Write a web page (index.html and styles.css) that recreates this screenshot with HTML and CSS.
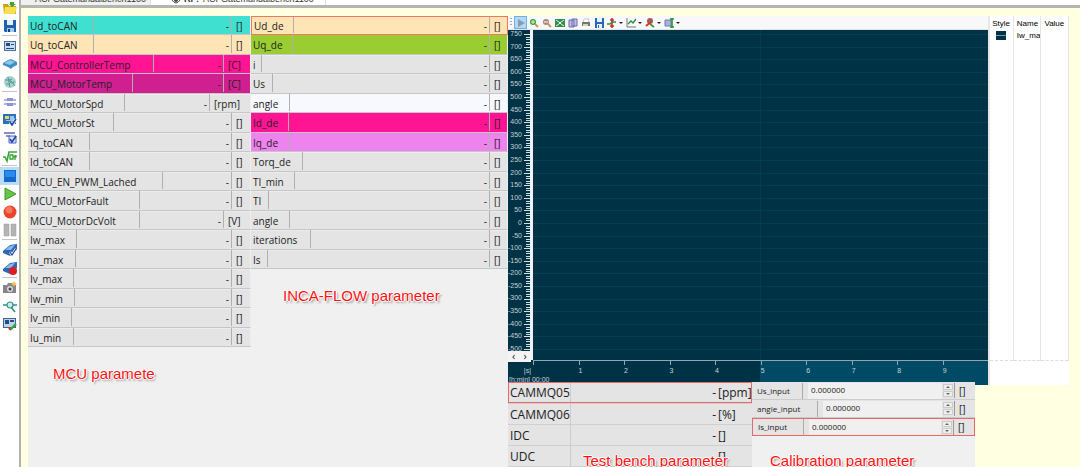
FILE: index.html
```
<!DOCTYPE html>
<html lang="en">
<head>
<meta charset="utf-8">
<title>Experiment environment</title>
<link rel="stylesheet" href="styles.css">
</head>
<body>
<div class="app">
  <nav class="rail" aria-label="Experiment tools">
    <button aria-label="Open"><svg viewBox="0 0 14 14"><path fill="#c9a21a" d="M0 3h5l1 2h7v8H1z"/><path fill="#f6e04c" d="M2 6h12l-2 7H1z"/><path fill="#39a935" d="M7 1h4v2h2l-4 3-3-3h1z"/></svg></button>
    <button aria-label="Save"><svg viewBox="0 0 14 14"><path fill="#1f62b0" d="M1 1h12v12H2l-1-1z"/><path fill="#e8f1fb" d="M4 1h6v5H4z"/><path fill="#a9c8ea" d="M4 9h7v4H4z"/><path fill="#123f7c" d="M5 10h2v3H5z"/></svg></button>
    <hr>
    <button aria-label="Environment"><svg viewBox="0 0 14 14"><path fill="#4c6f96" d="M1 2h12v10H1z"/><path fill="#c5dcf2" d="M2 3h10v8H2z"/><path fill="#274b78" d="M3 4h4v3H3zM8 5h3v1H8zM3 9h8v1H3z"/></svg></button>
    <button aria-label="Hardware"><svg viewBox="0 0 14 14"><path fill="#3f8fc4" d="M0 6l5-3 3-1 6 3v3l-4 2-2 2-3-2-5-2z"/><path fill="#8cc8ea" d="M1 6l6-3 5 2-5 3z"/></svg></button>
    <button aria-label="Database"><svg viewBox="0 0 14 14"><circle cx="7" cy="7" r="6" fill="#a9d3cc"/><path fill="none" stroke="#4e9a90" d="M2 5h6M5 2l2 10M8 6l4 5M9 4a2 2 0 1 0 2 2M3 9h4"/></svg></button>
    <hr>
    <button aria-label="Variables"><svg viewBox="0 0 14 14"><path stroke="#6268b4" stroke-width="1.2" d="M1 5h12M1 9h12"/><path fill="#8c92d4" d="M4 3h6v3H4zM4 8h6v3H4z"/></svg></button>
    <button aria-label="Select variables"><svg viewBox="0 0 14 14"><path fill="#2c70b5" d="M0 1h13v10H0z"/><path fill="#e8d65c" d="M2 3h4v3H2z"/><path fill="#9dc5eb" d="M7 3h4v5H3V7h4z"/><path fill="none" stroke="#fff" stroke-width="3" d="M7 9l2 3 4-6"/><path fill="none" stroke="#1947a5" stroke-width="1.6" d="M7 9l2 3 4-6"/></svg></button>
    <button aria-label="Filter variables"><svg viewBox="0 0 14 14"><path stroke="#6268b4" stroke-width="1.4" d="M1 2h11M3 5h4"/><path fill="#dbe3ff" stroke="#4a63b5" d="M6 5h7v7H6z"/><path fill="none" stroke="#1947a5" stroke-width="1.6" d="M7 8l2 3 4-6"/></svg></button>
    <button aria-label="Calculated signal"><svg viewBox="0 0 14 14"><path fill="none" stroke="#37a637" stroke-width="1.6" d="M0 8h2l2 4 2-9h8"/><path fill="none" stroke="#37a637" stroke-width="1.3" d="M7 6h3v4H7zM10 8h3V6M12 6v5"/></svg></button>
    <hr>
    <button class="on" aria-label="Stop"><svg viewBox="0 0 14 14"><path fill="#1669c9" d="M1 1h12v12H1z"/><path fill="#2b8af0" d="M2 2h10v6H2z"/></svg></button>
    <button aria-label="Start visualization"><svg viewBox="0 0 14 14"><path fill="#68c24c" stroke="#3c9a2d" d="M2 1l11 6-11 6z"/></svg></button>
    <button aria-label="Record"><svg viewBox="0 0 14 14"><circle cx="7" cy="7" r="6.500" fill="#e8452a"/><circle cx="6" cy="5" r="3.500" fill="#f5795a"/></svg></button>
    <button aria-label="Pause"><svg viewBox="0 0 14 14"><path fill="#b4b4b4" stroke="#999" stroke-width=".5" d="M1 1h5v12H1zM8 1h5v12H8z"/></svg></button>
    <hr>
    <button aria-label="Check memory pages"><svg viewBox="0 0 14 14"><path fill="#2e68b5" d="M0 8l7-6 7-1v6l-7 6-7-3z"/><path fill="#8ab7ea" d="M2 7l5-4 5-1-4 5z"/><path fill="none" stroke="#fff" stroke-width="2.400" d="M7 9l2 3 4-6"/><path fill="none" stroke="#1947a5" stroke-width="1.200" d="M7 9l2 3 4-6"/></svg></button>
    <button aria-label="Record memory"><svg viewBox="0 0 14 14"><path fill="#2e68b5" d="M0 8l7-6 7-1v6l-7 6-7-3z"/><path fill="#8ab7ea" d="M2 7l5-4 5-1-4 5z"/><circle cx="10" cy="10" r="4" fill="#d91f1f"/></svg></button>
    <hr>
    <button aria-label="Snapshot"><svg viewBox="0 0 14 14"><path fill="#85858c" d="M0 4h4l1-2h4l1 2h3v8H0z"/><circle cx="7" cy="8" r="3" fill="#d7d7dd"/><circle cx="7" cy="8" r="1.500" fill="#444"/><path fill="#f2c230" d="M11 0l1 2 2 1-2 1-1 2-1-2-2-1 2-1z"/></svg></button>
    <button aria-label="Find signal"><svg viewBox="0 0 14 14"><circle cx="7" cy="6" r="3" fill="#c9efe8" stroke="#2e9488" stroke-width="1.200"/><path fill="none" stroke="#2e9488" stroke-width="1.600" d="M0 6h4M10 6h4M8 8l4 5"/></svg></button>
    <button aria-label="Edit environment"><svg viewBox="0 0 14 14"><path fill="#3f6593" d="M0 1h13v10H0z"/><path fill="#b7d4f0" d="M1 2h11v8H1z"/><path fill="#274b78" d="M2 3h4v4H2zM7 3h4v2H7z"/><path stroke="#37a637" stroke-width="2.400" d="M7 13l6-6"/><path fill="#d93030" d="M5 10h2l1 3H6z"/></svg></button>
  </nav>

  <div class="work">
    <div class="tabs">
      <a class="tab" href="#one">ACFGatemandalbench1100</a>
      <a class="tab current" href="#two"><svg viewBox="0 0 10 8"><path fill="#fff" stroke="#555" d="M1 4q4-6 8 0q-4 6-8 0z"/><circle cx="5" cy="4" r="2" fill="#444"/></svg><b>RF:</b> <span>ACFGatemandalbench1100</span></a>
    </div>

    <main class="board">
      <section class="panel">
        <table class="signals" id="mcu"><tbody></tbody></table>
        <h2 class="note note-mcu">MCU paramete</h2>
      </section>
      <section class="panel">
        <table class="signals" id="flow"><tbody></tbody></table>
        <h2 class="note note-flow">INCA-FLOW parameter</h2>
      </section>

      <div class="right">
        <section class="scope">
          <div class="graph">
            <div class="toolbar">
              <i class="grip"></i>
              <button class="on" aria-label="Run"><svg viewBox="0 0 10 10"><path fill="#8b9bab" d="M2 1l7 4-7 4z"/></svg></button>
              <button aria-label="Zoom in"><svg viewBox="0 0 10 10"><path stroke="#c79b5b" stroke-width="2" d="M6 6l3 3"/><circle cx="4" cy="4" r="3" fill="#3da13d"/><path stroke="#d4f5d4" d="M2 4h4M4 2v4"/></svg></button>
              <button aria-label="Zoom out"><svg viewBox="0 0 10 10"><path stroke="#c79b5b" stroke-width="2" d="M6 6l3 3"/><circle cx="4" cy="4" r="3" fill="#ae8476"/><path stroke="#fff" d="M2 4h4"/></svg></button>
              <button aria-label="Fit"><svg viewBox="0 0 10 10"><path fill="#328d4c" d="M0 1h10v8H0z"/><path stroke="#d8f5dc" d="M1 2l3 2M9 2L6 4M1 8l3-2M9 8L6 6"/><path fill="#fff" d="M4 4h2v2H4z"/></svg></button>
              <button aria-label="Copy"><svg viewBox="0 0 10 10"><path fill="#c3c3e8" stroke="#6a6ab0" d="M1 2h5v7H1zM4 1h5v7H4z"/></svg></button>
              <button aria-label="Print"><svg viewBox="0 0 10 10"><path fill="#fff" stroke="#aaa" stroke-width=".6" d="M3 1h5L7 5H2z"/><path fill="#73777d" d="M1 4h8v4H1z"/><path fill="#d3d8a9" d="M2 6h5v2H2z"/></svg></button>
              <button aria-label="Save plot"><svg viewBox="0 0 10 10"><path fill="#2767b5" d="M1 0h9v10H1z"/><path fill="#e9f2ff" d="M3 0h5v4H3zM3 6h5v4H3z"/><path fill="#2767b5" d="M4 7h1v3H4z"/></svg></button>
              <button class="drop" aria-label="Cursor"><svg viewBox="0 0 10 10"><path stroke="#d12b2b" stroke-width="1.600" d="M5 0v10M3 2h4M3 8h4"/><path fill="none" stroke="#2a9339" stroke-width="1.400" d="M0 6h3l2-2h4"/></svg></button>
              <button class="drop" aria-label="Axis"><svg viewBox="0 0 10 10"><path fill="none" stroke="#777" d="M1 0v9h9"/><path fill="none" stroke="#2a9339" stroke-width="1.400" d="M2 6l3-3 2 2 3-4"/></svg></button>
              <button class="drop" aria-label="Trigger"><svg viewBox="0 0 10 10"><circle cx="5" cy="3" r="3" fill="#a45c51"/><path stroke="#d13a2b" stroke-width="2" d="M1 8l5-4"/><path stroke="#3a953a" stroke-width="1.600" d="M5 6l4 3"/></svg></button>
              <button class="drop" aria-label="Layout"><svg viewBox="0 0 10 10"><path fill="#a8b4dc" stroke="#6879b5" d="M1 2h6v6H1z"/><path stroke="#2a9339" stroke-width="1.600" d="M8 0v10M6 1h4M6 9h4"/></svg></button>
            </div>
            <div class="plot">
              <ol class="ylabels" id="ylabels"></ol>
              <div class="ruler"><svg preserveAspectRatio="none" viewBox="0 0 6 330"><path id="ticks" stroke="#d5dfe4" stroke-width="1" fill="none"/></svg></div>
              <div class="canvas"><svg preserveAspectRatio="none" viewBox="0 0 100 330"><path id="grid" stroke="#003e58" stroke-width="1" fill="none"/><path stroke="#003e58" d="M50 0V330" vector-effect="non-scaling-stroke"/></svg></div>
              <div class="pager"><button aria-label="Previous axis">‹</button><button aria-label="Next axis">›</button></div>
            </div>
            <div class="xaxis">
              <div class="xunit"><span>|s|</span><span>[h:min] 00:00</span></div>
              <ol class="xlabels"><li></li><li>1</li><li>2</li><li>3</li><li>4</li><li>5</li><li>6</li><li>7</li><li>8</li><li>9</li></ol>
            </div>
          </div>
          <div class="legend">
            <table>
              <thead><tr><th>Style</th><th>Name</th><th>Value</th></tr></thead>
              <tbody><tr><td><i class="swatch"></i></td><td>Iw_max</td><td></td></tr></tbody>
            </table>
          </div>
        </section>

        <div class="lower">
          <section class="bench">
            <table>
              <tbody>
                <tr class="picked"><th scope="row">CAMMQ05</th><td>-</td><td>[ppm]</td></tr>
                <tr><th scope="row">CAMMQ06</th><td>-</td><td>[%]</td></tr>
                <tr><th scope="row">IDC</th><td>-</td><td>[]</td></tr>
                <tr><th scope="row">UDC</th><td></td><td>[]</td></tr>
              </tbody>
            </table>
            <h2 class="note note-bench">Test bench parameter</h2>
          </section>
          <section class="calib">
            <div class="field"><label for="us">Us_input</label><input id="us" value="0.000000"><span class="spin"><button aria-label="Increase Us"></button><button aria-label="Decrease Us"></button></span><span class="unit">[]</span></div>
            <div class="field wide"><label for="an">angle_input</label><input id="an" value="0.000000"><span class="spin"><button aria-label="Increase angle"></button><button aria-label="Decrease angle"></button></span><span class="unit">[]</span></div>
            <div class="field picked"><label for="is">Is_input</label><input id="is" value="0.000000"><span class="spin"><button aria-label="Increase Is"></button><button aria-label="Decrease Is"></button></span><span class="unit">[]</span></div>
            <h2 class="note note-calib">Calibration parameter</h2>
          </section>
        </div>
      </div>
    </main>
  </div>
</div>
<script src="app.js"></script>
</body>
</html>
```
FILE: styles.css
```
* { box-sizing: border-box; }
body { margin: 0; font: 10px/12px "Open Sans", "Noto Sans", sans-serif; color: #222; background: #ffffe1; }
button { border: 0; padding: 0; background: none; color: inherit; font: inherit; display: flex; align-items: center; justify-content: center; }
table { border-collapse: collapse; }
th { font-weight: normal; text-align: left; }
ol { list-style: none; margin: 0; padding: 0; }

.app { display: flex; height: 100vh; overflow: hidden; }

.rail { flex: none; width: 19px; margin-top: -1px; background: #fff; }
.rail button { width: 19px; height: 18px; }
.rail svg { width: 14px; height: 14px; }
.rail .on { background: #b9dcfa; }
.rail hr { height: 1px; margin: 0 2px 1px; border: 0; background: #c4c4c4; }

.work { flex: 1; min-width: 0; display: flex; flex-direction: column; border-left: 2px solid #b4b4ae; }
.tabs { flex: none; display: flex; align-items: flex-end; height: 8px; overflow: hidden; background: #fff; border-bottom: 3px solid #b4b4b0; }
.tab { flex: none; display: flex; align-items: center; height: 11px; padding: 0 4px 0 14px; font-size: 8px; line-height: 11px; font-size: 9px; font-family: "Liberation Sans", Arial, sans-serif; color: #333; text-decoration: none; background: #f0f0f0; border-right: 1px solid #ddd; }
.tab.current { padding: 0 11px 0 20px; background: #fff; }
.tab svg { width: 10px; height: 8px; margin-right: 3px; }
.tab b { margin-right: 4px; }

.board { flex: 1; min-height: 0; display: grid; grid-template-columns: 223fr 257fr 561fr; padding: 8px 11px 0 7px; }
.panel { background: #f0f0f0; min-width: 0; }

.signals, .signals tbody { display: block; }
.signals tbody { display: grid; grid-auto-rows: 19px 20px; }
.signals tr { display: flex; background: #e4e4e4; border-bottom: 1px solid #c6c6c6; border-right: 1px solid #eee; box-shadow: inset 0 1px #ececec; }
.signals th, .signals td { padding: 4px 2px 0; line-height: 13px; white-space: nowrap; }
.signals th, .value { border-right: 1px solid #b0b0b0; margin-bottom: 1px; }
.signals .value { flex: 1; text-align: right; padding-right: 2px; }
.signals .unit { padding-left: 4px; }
.signals .turquoise { background: #40e0d0; box-shadow: none; }
.signals .moccasin { background: #ffe4b5; box-shadow: none; }
.signals .pink { background: #ff1493; box-shadow: none; }
.signals .plum { background: #d02090; box-shadow: none; }
.signals .green { background: #9acd32; box-shadow: none; }
.signals .ghost { background: #f8f8ff; box-shadow: none; }
.signals .violet { background: #ee82ee; box-shadow: none; }
.signals .focus { border: 1px solid #f07860; }
.signals .focus th, .signals .focus td { padding-top: 3px; }

.note { margin: 0; font: 15px/18px "Liberation Sans", Arial, sans-serif; color: #ff1010; white-space: nowrap; text-shadow: -1px 0 #fff, 1px 0 #fff, 0 -1px #fff, 0 1px #fff, 2px 2px 2px #999; }
.note-mcu { padding: 18px 0 0 25px; }
.note-flow { padding: 18px 0 0 32px; }
.note-bench { position: absolute; left: 75px; top: 70px; }
.note-calib { padding: 16px 0 0 18px; }

.right { min-width: 0; display: flex; flex-direction: column; }
.scope { display: flex; }
.graph { flex: 482 1 0; min-width: 0; }
.toolbar { display: flex; align-items: center; height: 14px; background: #f8f8f8; padding-left: 2px; border-bottom: 1px solid #e4e4e4; }
.toolbar button { width: 13px; height: 13px; }
.toolbar svg { flex: none; width: 10px; height: 10px; }
.toolbar .on { background: #b3d7f5; border: 1px solid #6eb0e8; }
.toolbar .drop { width: 19px; gap: 2px; }
.toolbar .drop::after { content: ""; border: 2px solid transparent; border-top-color: #222; border-bottom: 0; }
.grip { width: 2px; height: 9px; margin-right: 2px; background: repeating-linear-gradient(#aaa 0 1px, transparent 1px 3px); }

.plot { position: relative; display: flex; height: 330px; background: #003246; }
.ylabels { width: 14px; display: flex; flex-direction: column; justify-content: space-between; padding-bottom: 7px; }
.ylabels li { display: flex; justify-content: flex-end; font: 7px/8px "Liberation Sans", Arial, sans-serif; color: #c3d1d8; }
.ruler { width: 11px; padding-left: 2px; border-right: 3px solid #eef2f4; }
.ruler svg, .canvas svg { display: block; width: 100%; height: 100%; }
.canvas { flex: 1; min-width: 0; }
.pager { position: absolute; left: 0; bottom: -2px; width: 23px; height: 11px; display: flex; justify-content: space-around; background: #f4f4f4; color: #222; }
.pager button { height: 9px; font-size: 11px; }

.xaxis { display: flex; height: 25px; background: #003246; font: 7px/9px "Liberation Sans", Arial, sans-serif; color: #c5d3da; overflow: hidden; }
.xunit { width: 25px; padding: 6px 0 0 1px; white-space: nowrap; }
.xunit span { display: block; }
.xunit span:first-child { text-align: right; padding-right: 2px; }
.xlabels { flex: 1; display: grid; grid-template-columns: repeat(10, 1fr); border-top: 1px solid #8fa7b3; background: linear-gradient(90deg, transparent 50%, #004a66 50%); }
.xlabels li { padding-top: 5px; }
.xlabels li::before { content: ""; position: absolute; width: 1px; height: 4px; margin-top: -5px; background: #8fa7b3; }

.legend { flex: 79 1 0; min-width: 0; background: #fff; border-left: 2px solid #e8e8e8; }
.legend table { width: 100%; height: 345px; table-layout: fixed; border-bottom: 1px dashed #ddd; font: 8px/12px "Liberation Sans", Arial, sans-serif; color: #000; }
.legend th { height: 14px; padding: 1px 2px 0 3px; }
.legend th, .legend td { border-right: 1px solid #e4e4e4; }
.legend th:first-child { width: 23px; padding: 1px 0 0 2px; }
.legend td { vertical-align: top; padding: 0 0 0 3px; overflow: hidden; }
.legend td:nth-child(2) { white-space: nowrap; }
.swatch { display: block; width: 10px; height: 9px; margin: 1px 0 0 3px; background: linear-gradient(#003246 4px, #7397a7 4px 5px, #003246 5px); }

.lower { position: relative; flex: 1; display: grid; grid-template-columns: 244fr 223fr 94fr; margin-top: -3px; }
.bench { position: relative; background: #f0f0f0; }
.bench table { width: 100%; table-layout: fixed; font-size: 12px; line-height: 14px; background: #e4e4e4; }
.bench tr { height: 21px; border-bottom: 1px solid #d0d0d0; }
.bench th { width: 62px; padding: 2px 2px 0; border-right: 1px solid #ccc; }
.bench td { padding: 2px 0 0; }
.bench td:nth-child(2) { text-align: right; padding-right: 1px; }
.bench td:nth-child(3) { width: 35px; padding-left: 1px; }
.bench .picked { outline: 1px solid #e86868; outline-offset: -1px; }

.calib { background: #f0f0f0; }
.field { display: flex; align-items: center; height: 18px; background: #e4e4e4; border-bottom: 1px solid #ccc; font-size: 8px; line-height: 12px; }
.field label { width: 51px; padding: 2px 0 2px 5px; border-right: 1px solid #aaa; }
.field input { flex: 1; min-width: 0; height: 16px; margin-left: 5px; padding: 0 3px 2px; border: 0; background: #f0f0f0; color: #222; font: 8px/12px "Open Sans", "Noto Sans", sans-serif; }
.field.wide label { width: 66px; }
.spin { width: 13px; height: 15px; display: flex; flex-direction: column; gap: 1px; padding: 1px; border-right: 1px solid #999; }
.spin button { flex: 1; border: 1px solid #ccc; background: #eee; }
.spin button::before { content: ""; border: 2px solid transparent; border-bottom-color: #666; border-top: 0; }
.spin button + button::before { border: 2px solid transparent; border-top-color: #666; border-bottom: 0; }
.field .unit { width: 20px; padding-left: 4px; font-size: 10px; }
.field.picked { border: 1px solid #e86868; }
```
FILE: app.js
```
// name, divider position, unit, unit cell width, row colour
const mcu = [
  ["Ud_toCAN", 66, "[]", 18, "turquoise"],
  ["Uq_toCAN", 66, "[]", 18, "moccasin"],
  ["MCU_ControllerTemp", 126, "[C]", 26, "pink"],
  ["MCU_MotorTemp", 105, "[C]", 26, "plum"],
  ["MCU_MotorSpd", 97, "[rpm]", 40, ""],
  ["MCU_MotorSt", 86, "[]", 18, ""],
  ["Iq_toCAN", 62, "[]", 18, ""],
  ["Id_toCAN", 62, "[]", 18, ""],
  ["MCU_EN_PWM_Lached", 135, "[]", 18, ""],
  ["MCU_MotorFault", 112, "[]", 18, ""],
  ["MCU_MotorDcVolt", 112, "[V]", 26, ""],
  ["Iw_max", 49, "[]", 18, ""],
  ["Iu_max", 48, "[]", 18, ""],
  ["Iv_max", 46, "[]", 18, ""],
  ["Iw_min", 47, "[]", 18, ""],
  ["Iv_min", 44, "[]", 18, ""],
  ["Iu_min", 46, "[]", 18, ""]
];
const flow = [
  ["Ud_de", 42, "[]", 17, "moccasin focus"],
  ["Uq_de", 42, "[]", 17, "green"],
  ["i", 11, "[]", 17, ""],
  ["Us", 22, "[]", 17, ""],
  ["angle", 39, "[]", 17, "ghost"],
  ["Id_de", 38, "[]", 17, "pink"],
  ["Iq_de", 38, "[]", 17, "violet"],
  ["Torq_de", 52, "[]", 17, ""],
  ["TI_min", 44, "[]", 17, ""],
  ["TI", 18, "[]", 17, ""],
  ["angle", 39, "[]", 17, ""],
  ["iterations", 60, "[]", 17, ""],
  ["Is", 17, "[]", 17, ""]
];
function fill(id, rows) {
  document.querySelector("#" + id + " tbody").innerHTML = rows.map(([name, w, unit, uw, tone]) =>
    `<tr class="${tone}"><th scope="row" style="width:${w}px">${name}</th><td class="value">-</td><td class="unit" style="width:${uw}px">${unit}</td></tr>`
  ).join("");
}
fill("mcu", mcu);
fill("flow", flow);

// vertical axis from 750 down to -500
const top0 = 4, step = (319 - top0) / 25;
let labels = "", grid = "", ticks = "";
for (let i = 0; i <= 25; i++) {
  const y = Math.round(top0 + i * step) + 0.5;
  labels += `<li>${750 - i * 50}</li>`;
  grid += `M0 ${y}H100`;
  ticks += `M0 ${y}H6`;
  for (let k = 1; k < 5; k++) ticks += `M2 ${y + Math.round(k * 2.5)}H6`;
}
document.getElementById("ylabels").innerHTML = labels;
document.getElementById("grid").setAttribute("d", grid);
document.getElementById("ticks").setAttribute("d", ticks);
```
